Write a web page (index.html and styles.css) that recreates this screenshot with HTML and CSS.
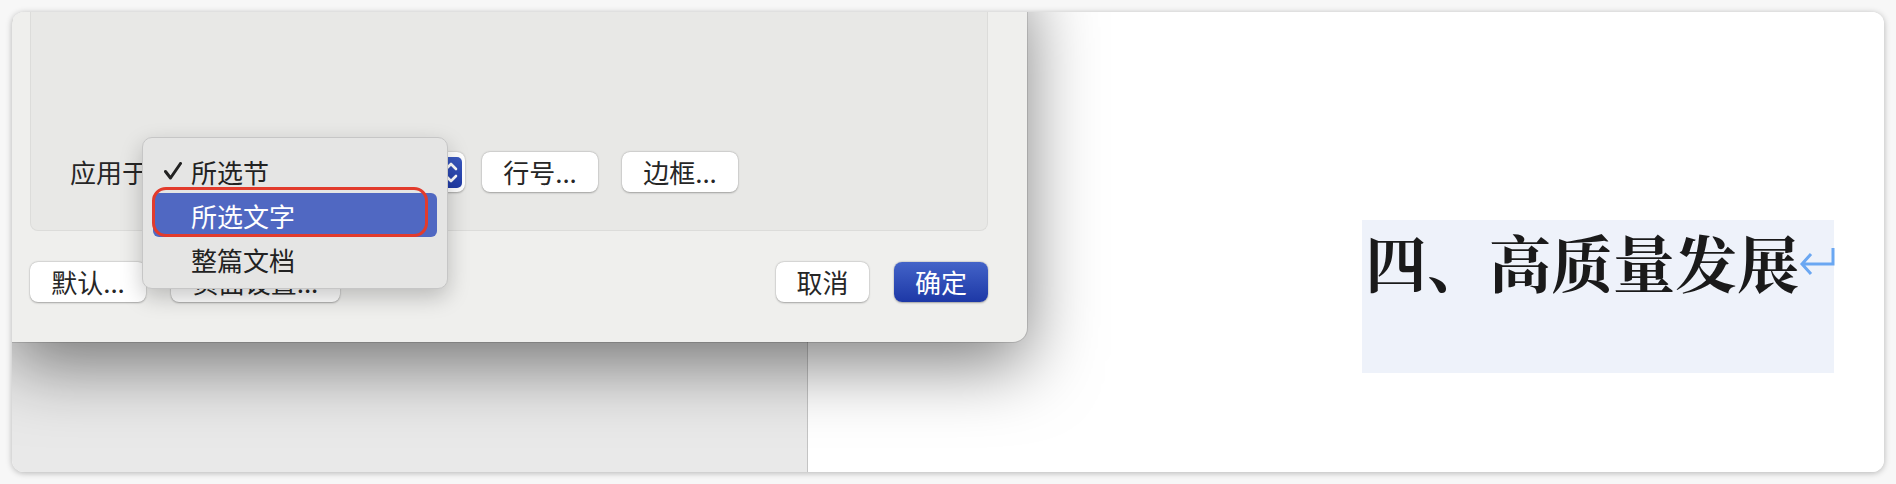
FILE: index.html
```html
<!DOCTYPE html>
<html lang="zh-CN">
<head>
<meta charset="utf-8">
<title>文档</title>
<link rel="stylesheet" href="styles.css">
</head>
<body>
<div class="frame">
  <div class="sidebar"></div>
  <div class="page">
    <div class="selection">
      <span class="heading">四、高质量发展</span>
      <svg class="para-mark" width="36" height="32" viewBox="0 0 36 32"><path d="M34 2 V18 H3 M12 8 L3 18 L12 28" fill="none" stroke="#6aa7f2" stroke-width="3" stroke-linejoin="miter"/></svg>
    </div>
  </div>

  <div class="dialog">
    <div class="panel">
      <div class="apply-row">
        <span class="label">应用于</span>
        <div class="popup">
          <span class="popup-text">所选节</span>
          <span class="stepper"><svg width="22" height="31" viewBox="0 0 22 31"><path d="M6 12 L11 7 L16 12 M6 19 L11 24 L16 19" fill="none" stroke="#fff" stroke-width="2.6" stroke-linecap="round" stroke-linejoin="round"/></svg></span>
        </div>
        <button class="btn btn-line">行号...</button>
        <button class="btn btn-border">边框...</button>
      </div>
    </div>
    <div class="footer">
      <div class="footer-group">
        <button class="btn btn-default">默认...</button>
        <button class="btn btn-setup">页面设置...</button>
      </div>
      <div class="footer-group">
        <button class="btn btn-cancel">取消</button>
        <button class="btn btn-ok">确定</button>
      </div>
    </div>

    <div class="menu">
      <div class="menu-item"><span class="check"><svg width="20" height="18" viewBox="0 0 20 18"><path d="M2.5 9.5 L7.5 16 L17.5 1.5" fill="none" stroke="#222" stroke-width="3" stroke-linecap="round" stroke-linejoin="round"/></svg></span>所选节</div>
      <div class="menu-item active"><span class="check"></span>所选文字</div>
      <div class="menu-item"><span class="check"></span>整篇文档</div>
      <div class="annot"></div>
    </div>
  </div>
</div>
</body>
</html>
```

FILE: styles.css
```css
html, body {
  margin: 0;
  padding: 0;
}
body {
  background: #f7f7f7;
  width: 1896px;
  height: 484px;
  overflow: hidden;
  font-family: "Noto Sans CJK SC", "Noto Sans", sans-serif;
  color: #262626;
}
.frame {
  position: relative;
  margin: 12px;
  width: 1872px;
  height: 460px;
  border-radius: 12px;
  overflow: hidden;
  display: flex;
  box-shadow: 0 1px 6px rgba(0, 0, 0, 0.28);
  background: #fff;
}
.sidebar {
  width: 795px;
  flex: none;
  background: #e9e9e9;
  border-right: 1px solid #c4c4c4;
}
.page {
  flex: 1;
  background: #fff;
  padding: 208px 0 0 554px;
}
.selection {
  width: 472px;
  height: 153px;
  box-sizing: border-box;
  background: #eef2fa;
  display: flex;
  align-items: flex-start;
  padding: 8px 0 0 3px;
}
.heading {
  font-family: "Noto Serif CJK SC", "Songti SC", "Noto Sans CJK SC", serif;
  font-weight: 700;
  font-size: 62px;
  line-height: 68px;
  color: #1a1a1a;
  white-space: nowrap;
}
.para-mark {
  flex: none;
  margin-top: 18px;
}

/* dialog sheet */
.dialog {
  position: absolute;
  left: 0;
  top: -40px;
  width: 1015px;
  height: 370px;
  box-sizing: border-box;
  padding: 0 39px 40px 18px;
  background: #efefed;
  border-radius: 0 0 14px 0;
  box-shadow: 0 0 0 1px rgba(0, 0, 0, 0.12), 0 22px 70px rgba(0, 0, 0, 0.5);
  display: flex;
  flex-direction: column;
  z-index: 2;
}
.panel {
  height: 259px;
  box-sizing: border-box;
  background: #e8e8e6;
  border: 1px solid #dcdcda;
  border-top: none;
  border-radius: 0 0 8px 8px;
  display: flex;
  flex-direction: column;
  justify-content: flex-end;
  padding: 0 0 38px 39px;
}
.apply-row {
  display: flex;
  align-items: center;
  height: 40px;
}
.label {
  font-size: 26px;
  line-height: 40px;
  width: 78px;
  white-space: nowrap;
}
.popup {
  margin-left: 8px;
  width: 309px;
  height: 40px;
  box-sizing: border-box;
  background: #fff;
  border-radius: 8px;
  box-shadow: 0 0.5px 2px rgba(0, 0, 0, 0.3);
  display: flex;
  align-items: center;
  justify-content: space-between;
  padding: 0 3px 0 14px;
  font-size: 26px;
}
.stepper {
  width: 22px;
  height: 31px;
  background: linear-gradient(#3a59c0, #1f3aa6);
  border-radius: 5px;
  display: flex;
}
.btn {
  font-family: "Noto Sans CJK SC", "Noto Sans", sans-serif;
  font-size: 26px;
  line-height: 40px;
  height: 40px;
  padding: 0;
  margin: 0;
  border: none;
  border-radius: 8px;
  background: #fff;
  color: #262626;
  box-shadow: 0 0 0 0.5px rgba(0, 0, 0, 0.06), 0 0.5px 2px rgba(0, 0, 0, 0.3);
  text-align: center;
  white-space: nowrap;
}
.btn-line {
  width: 116px;
  margin-left: 17px;
}
.btn-border {
  width: 116px;
  margin-left: 24px;
}
.footer {
  margin-top: 31px;
  height: 40px;
  display: flex;
  justify-content: space-between;
}
.footer-group {
  display: flex;
  gap: 25px;
}
.btn-default { width: 116px; }
.btn-setup { width: 169px; }
.btn-cancel { width: 93px; }
.btn-ok {
  width: 94px;
  color: #fff;
  background: linear-gradient(#4363c8, #1d38a6);
}

/* popup menu */
.menu {
  position: absolute;
  left: 130px;
  top: 165px;
  width: 306px;
  height: 152px;
  box-sizing: border-box;
  padding: 11px 10px 7px 10px;
  background: #e5e5e4;
  border: 1px solid #c6c6c6;
  border-radius: 10px;
  box-shadow: 0 8px 22px rgba(0, 0, 0, 0.22);
  z-index: 3;
}
.menu-item {
  height: 44px;
  display: flex;
  align-items: center;
  font-size: 26px;
  color: #222;
  padding-left: 10px;
  border-radius: 6px;
}
.menu-item.active {
  background: #5068c2;
  color: #fff;
}
.check {
  width: 28px;
  flex: none;
  display: flex;
  align-items: center;
}
.annot {
  position: absolute;
  left: 9px;
  top: 49px;
  width: 276px;
  height: 50px;
  box-sizing: border-box;
  border: 3px solid #e23b2c;
  border-radius: 14px;
}
```
